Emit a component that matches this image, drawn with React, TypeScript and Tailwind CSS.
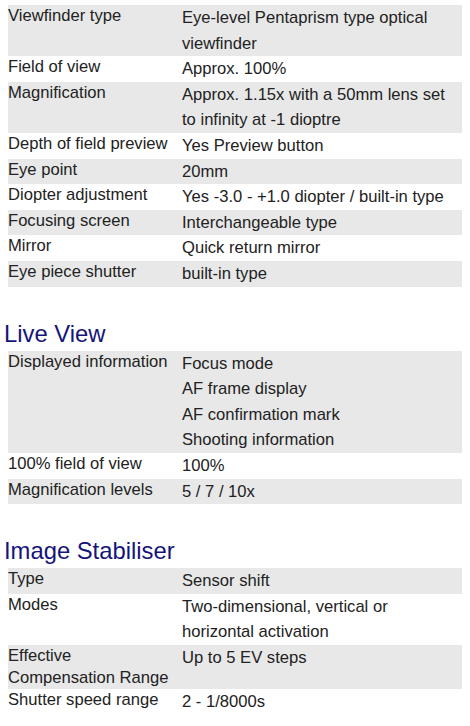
import React from 'react';

type Row = { label: string[]; value: string[] };

const viewfinder: Row[] = [
  { label: ['Viewfinder type'], value: ['Eye-level Pentaprism type optical', 'viewfinder'] },
  { label: ['Field of view'], value: ['Approx. 100%'] },
  { label: ['Magnification'], value: ['Approx. 1.15x with a 50mm lens set', 'to infinity at -1 dioptre'] },
  { label: ['Depth of field preview'], value: ['Yes Preview button'] },
  { label: ['Eye point'], value: ['20mm'] },
  { label: ['Diopter adjustment'], value: ['Yes -3.0 - +1.0 diopter / built-in type'] },
  { label: ['Focusing screen'], value: ['Interchangeable type'] },
  { label: ['Mirror'], value: ['Quick return mirror'] },
  { label: ['Eye piece shutter'], value: ['built-in type'] },
];

const liveView: Row[] = [
  {
    label: ['Displayed information'],
    value: ['Focus mode', 'AF frame display', 'AF confirmation mark', 'Shooting information'],
  },
  { label: ['100% field of view'], value: ['100%'] },
  { label: ['Magnification levels'], value: ['5 / 7 / 10x'] },
];

const stabiliser: Row[] = [
  { label: ['Type'], value: ['Sensor shift'] },
  { label: ['Modes'], value: ['Two-dimensional, vertical or', 'horizontal activation'] },
  { label: ['Effective', 'Compensation Range'], value: ['Up to 5 EV steps'] },
  { label: ['Shutter speed range'], value: ['2 - 1/8000s'] },
];

const SpecTable: React.FC<{ rows: Row[] }> = ({ rows }) => (
  <div className="mx-[8px] flex flex-col">
    {rows.map((row, i) => (
      <div key={i} className={`flex ${i % 2 === 0 ? 'bg-[#e8e8e8]' : 'bg-white'}`}>
        <div className="w-[174px] shrink-0 leading-[22px] whitespace-nowrap">
          {row.label.map((l) => (
            <div key={l}>{l}</div>
          ))}
        </div>
        <div className="flex-1 leading-[25.6px] whitespace-nowrap">
          {row.value.map((v) => (
            <div key={v}>{v}</div>
          ))}
        </div>
      </div>
    ))}
  </div>
);

const Heading: React.FC<{ children: React.ReactNode }> = ({ children }) => (
  <h2 className="mt-[33px] mb-[4px] pl-[4px] text-[23.8px] leading-[27px] text-[#14147a]">{children}</h2>
);

export default function App() {
  return (
    <div
      className="w-[470px] min-h-[726px] bg-white pt-[5px] text-[16.6px] text-[#222222]"
      style={{ fontFamily: '"Liberation Sans", Arial, sans-serif' }}
    >
      <SpecTable rows={viewfinder} />
      <Heading>Live View</Heading>
      <SpecTable rows={liveView} />
      <Heading>Image Stabiliser</Heading>
      <SpecTable rows={stabiliser} />
    </div>
  );
}
